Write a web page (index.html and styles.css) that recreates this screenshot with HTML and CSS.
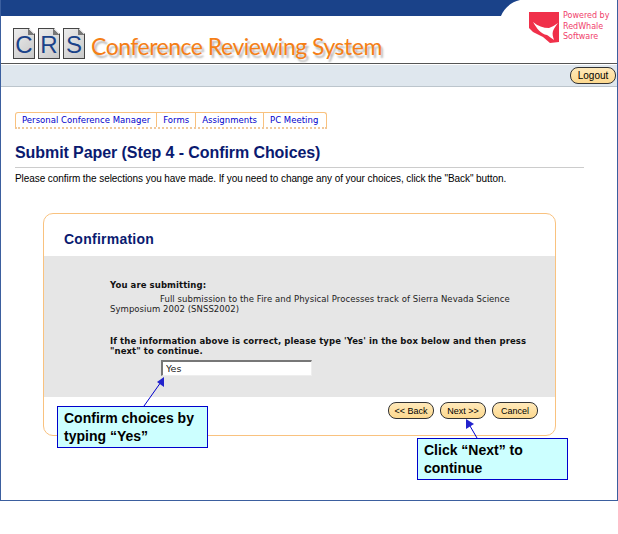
FILE: index.html
```html
<!DOCTYPE html>
<html lang="en">
<head>
<meta charset="utf-8">
<title>Conference Reviewing System</title>
<link rel="stylesheet" href="styles.css">
</head>
<body>
<div class="frame">
  <header class="masthead">
    <svg class="topbar" width="530" height="17" viewBox="0 0 530 17"><path d="M0 0H519C510 2 503 8 500 16H0Z" fill="#1a4289"/></svg>
    <div class="brand">
      <div class="tiles">
        <span class="tile">C</span><span class="tile">R</span><span class="tile">S</span>
      </div>
      <span class="brand-name">Conference Reviewing System</span>
    </div>
    <div class="vendor">
      <svg width="31" height="32" viewBox="0 0 31 32"><path d="M0 0H30V30L21 31L14 25L4 20L0 16Z" fill="#f0304a"/><path d="M4 10C9 14 14 16 20 16C23 15 26 13 29 11C27 14 25 16 24 19C23 22 24 25 25 28C22 26 20 24 18 23C12 22 8 17 4 10Z" fill="#fff"/></svg>
      <div class="vendor-text">Powered by<br>RedWhale<br>Software</div>
    </div>
  </header>
  <div class="band"><button class="pill logout">Logout</button></div>
  <main class="content">
    <nav class="tabs">
      <a class="tab">Personal Conference Manager</a><a class="tab">Forms</a><a class="tab">Assignments</a><a class="tab last">PC Meeting</a>
    </nav>
    <h1 class="title">Submit Paper (Step 4 - Confirm Choices)</h1>
    <p class="intro">Please confirm the selections you have made. If you need to change any of your choices, click the "Back" button.</p>
    <section class="card">
      <h2 class="card-title">Confirmation</h2>
      <div class="card-body">
        <p class="label">You are submitting:</p>
        <p class="detail"><span class="indent"></span>Full submission to the Fire and Physical Processes track of Sierra Nevada Science Symposium 2002 (SNSS2002)</p>
        <p class="label second">If the information above is correct, please type 'Yes' in the box below and then press "next" to continue.</p>
        <input class="field" type="text" value="Yes">
      </div>
      <div class="actions">
        <button class="pill act">&lt;&lt; Back</button>
        <button class="pill act">Next &gt;&gt;</button>
        <button class="pill act">Cancel</button>
      </div>
    </section>
  </main>
  <svg class="arrow arrow-a" width="26" height="32" viewBox="0 0 26 32"><path d="M3 30L20 6" stroke="#0000cc" fill="none"/><path d="M16 6L23 1V11Z" fill="#2222cc"/></svg>
  <svg class="arrow arrow-b" width="18" height="24" viewBox="0 0 18 24"><path d="M15 22L8 10" stroke="#0000cc" fill="none"/><path d="M4 3L12 8L4 13Z" fill="#2222cc"/></svg>
  <div class="callout callout-a">Confirm choices by<br>typing “Yes”</div>
  <div class="callout callout-b">Click “Next” to<br>continue</div>
</div>
</body>
</html>
```
FILE: styles.css
```css
* { box-sizing: border-box; }
html, body { margin: 0; padding: 0; background: #fff; }
body { height: 534px; overflow: hidden; font-family: "Liberation Sans", Arial, sans-serif; }
.frame { position: relative; width: 618px; height: 501px; border: 1px solid #3b5f9f; border-top: 0; background: #fff; }
.masthead { position: relative; height: 64px; border-bottom: 1px solid #555; }
.topbar { position: absolute; left: 0; top: 0; }
.brand { position: absolute; left: 12px; top: 28px; display: flex; align-items: center; }
.tiles { display: flex; gap: 3px; }
.tile { position: relative; width: 22px; height: 31px; border: 1px solid #444; background: linear-gradient(135deg, #ececec, #c8c8c8); color: #1a4289; font: 24px/31px "Liberation Sans", Arial, sans-serif; text-align: center; clip-path: polygon(0 0, 16px 0, 100% 6px, 100% 100%, 0 100%); }
.tile::after { content: ""; position: absolute; right: 0; top: -1px; width: 6px; height: 7px; background: linear-gradient(45deg, #777 50%, transparent 50%); }
.brand-name { margin-left: 6px; font: 23px/30px "Lato", sans-serif; letter-spacing: -0.5px; color: #f57f17; text-shadow: 2px 3px 2px #bbb; position: relative; top: 2px; }
.vendor { position: absolute; left: 528px; top: 11px; display: flex; gap: 3px; }
.vendor svg { margin-top: 1px; }
.vendor-text { font: 8px/10.5px "DejaVu Sans", Verdana, sans-serif; color: #f0406a; }
.band { display: flex; justify-content: flex-end; align-items: center; height: 22px; margin-top: 1px; padding-right: 1px; background: #dfe7ee; border-bottom: 1px solid #bcc5cc; }
.pill { padding: 0; border: 1px solid #333; border-radius: 8px; background: linear-gradient(#ffe9ba, #fdd98f); color: #000; font-family: "Liberation Sans", Arial, sans-serif; }
.logout { width: 46px; height: 17px; font-size: 10px; }
.content { padding: 25px 33px 0 14px; }
.tabs { display: flex; width: fit-content; height: 17px; border: 1px solid #f9c27f; border-bottom: 2px dotted #f0c89a; border-radius: 3px 3px 0 0; }
.tab { padding: 0 6px; color: #0000cc; font: 8.5px/15px "DejaVu Sans", Verdana, sans-serif; letter-spacing: 0.03px; border-right: 1px solid #f9c27f; }
.tab.last { border-right: 0; padding-right: 8px; }
.title { margin: 14px 0 0; padding-bottom: 4px; font: bold 16px/20px "Liberation Sans", Arial, sans-serif; color: #0a1a70; border-bottom: 1px solid #ccc; letter-spacing: -0.08px; }
.intro { margin: 5px 0 0; font: 10px/12px "Liberation Sans", Arial, sans-serif; color: #000; white-space: nowrap; letter-spacing: -0.07px; }
.card { width: 513px; height: 223px; margin: 28px 0 0 28px; border: 1px solid #f9c27f; border-radius: 10px; overflow: hidden; background: #fff; }
.card-title { height: 42px; margin: 0; padding: 16px 0 0 20px; font: bold 14px/18px "Liberation Sans", Arial, sans-serif; letter-spacing: 0.25px; color: #0a1a70; }
.card-body { height: 141px; padding: 24px 24px 0 66px; background: #e6e6e6; font: 8.5px/10px "DejaVu Sans", Verdana, sans-serif; color: #222; }
.card-body p { margin: 0; }
.label { font-weight: bold; color: #111; letter-spacing: 0.09px; }
.card-body .detail { margin-top: 4px; padding-right: 18px; letter-spacing: 0.06px; }
.indent { display: inline-block; width: 50px; height: 1px; }
.card-body .second { margin-top: 22px; }
.field { display: block; width: 151px; height: 16px; margin: 4px 0 0 51px; padding: 0 0 0 3px; border: 1px solid #eee; border-top: 2px solid #777; border-left: 2px solid #777; background: #fff; font: 9.5px/12px "DejaVu Sans", Verdana, sans-serif; color: #222; }
.actions { display: flex; justify-content: flex-end; gap: 6px; padding: 5px 17px 0 0; }
.act { width: 46px; height: 17px; font-size: 9px; }
.callout { position: absolute; width: 151px; height: 42px; padding: 2px 6px; border: 1px solid #0000cc; background: #ccffff; color: #000; font: bold 14px/18px "Liberation Sans", Arial, sans-serif; }
.callout-a { left: 56px; top: 406px; }
.callout-b { left: 416px; top: 438px; }
.arrow { position: absolute; }
.arrow-a { left: 140px; top: 376px; }
.arrow-b { left: 461px; top: 416px; }
```
